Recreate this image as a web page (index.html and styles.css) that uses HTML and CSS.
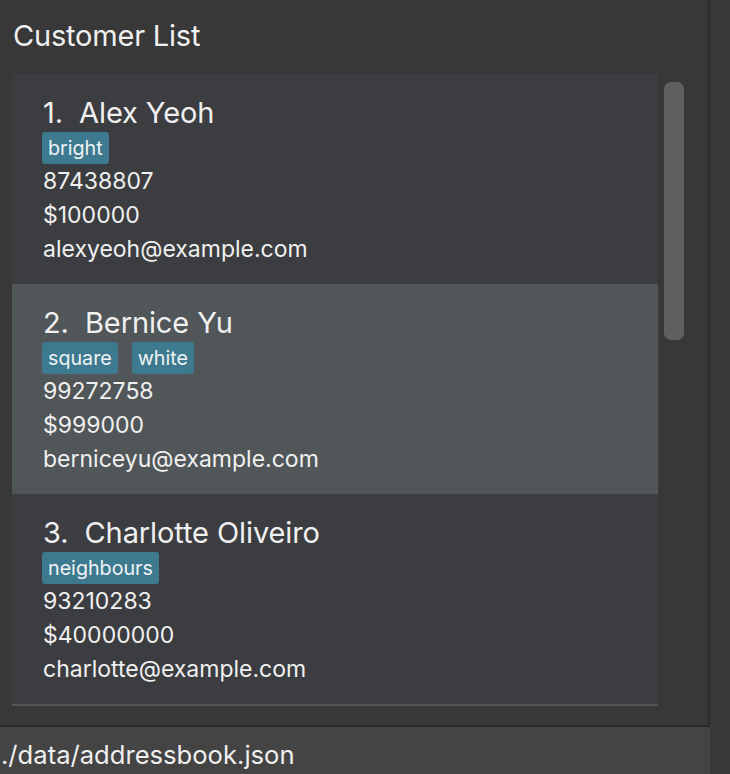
FILE: index.html
```html
<!DOCTYPE html>
<html lang="en">
<head>
<meta charset="utf-8">
<title>Customer List</title>
<link rel="stylesheet" href="styles.css">
</head>
<body>
<div class="app">
  <div class="left">
    <section class="panel">
      <h1 class="title">Customer List</h1>
      <div class="listview">
        <ul class="list">
          <li class="cell">
            <div class="name">1.&nbsp; Alex Yeoh</div>
            <div class="tags"><span class="tag">bright</span></div>
            <div class="line">87438807</div>
            <div class="line">$100000</div>
            <div class="line">alexyeoh@example.com</div>
          </li>
          <li class="cell selected">
            <div class="name">2.&nbsp; Bernice Yu</div>
            <div class="tags"><span class="tag">square</span><span class="tag">white</span></div>
            <div class="line">99272758</div>
            <div class="line">$999000</div>
            <div class="line">berniceyu@example.com</div>
          </li>
          <li class="cell">
            <div class="name">3.&nbsp; Charlotte Oliveiro</div>
            <div class="tags"><span class="tag">neighbours</span></div>
            <div class="line">93210283</div>
            <div class="line">$40000000</div>
            <div class="line">charlotte@example.com</div>
          </li>
        </ul>
        <div class="track"><div class="thumb"></div></div>
      </div>
    </section>
    <footer class="status">./data/addressbook.json</footer>
  </div>
  <div class="right"></div>
</div>
</body>
</html>
```

FILE: styles.css
```css
* { box-sizing: border-box; }
html, body {
  margin: 0;
  padding: 0;
  height: 100%;
  background: #383838;
  color: #f0f0f0;
  font-family: Inter, "Noto Sans", "Liberation Sans", sans-serif;
  overflow: hidden;
}
.app {
  display: flex;
  width: 730px;
  height: 774px;
}
.left {
  width: 710px;
  display: flex;
  flex-direction: column;
}
.right {
  flex: 1;
  background: #383838;
}
.panel {
  height: 727px;
  border-right: 2px solid #2b2b2b;
  border-bottom: 2px solid #2b2b2b;
  background: #383838;
  padding: 18px 0 0 12px;
  display: flex;
  flex-direction: column;
}
.title {
  margin: 0 0 21px 1px;
  font-size: 29px;
  font-weight: 400;
  line-height: 35px;
  letter-spacing: -0.2px;
}
.listview {
  display: flex;
  align-items: flex-start;
}
.list {
  list-style: none;
  margin: 0;
  padding: 0;
  width: 646px;
  border-bottom: 2px solid #4f5558;
}
.cell {
  height: 210px;
  background: #3c3d40;
  padding: 21px 0 18px 31px;
}
.cell.selected {
  background: #515659;
}
.name {
  font-size: 29px;
  line-height: 35px;
  letter-spacing: -0.1px;
  margin-bottom: 2px;
}
.tags {
  display: flex;
  gap: 14px;
  height: 32px;
  margin-left: -1px;
}
.tag {
  background: #3e7a8f;
  border-radius: 3px;
  font-size: 19.7px;
  line-height: 32px;
  padding: 0 6px;
  color: #eef2f4;
}
.line {
  font-size: 23px;
  line-height: 34px;
}
.track {
  width: 32px;
  padding: 8px 0 0 6px;
}
.thumb {
  width: 20px;
  height: 258px;
  background: #5f5f5f;
  border-radius: 7px;
}
.status {
  height: 47px;
  background: #444444;
  font-size: 25.6px;
  line-height: 41px;
  padding: 7px 0 0 1px;
  white-space: nowrap;
}
```
